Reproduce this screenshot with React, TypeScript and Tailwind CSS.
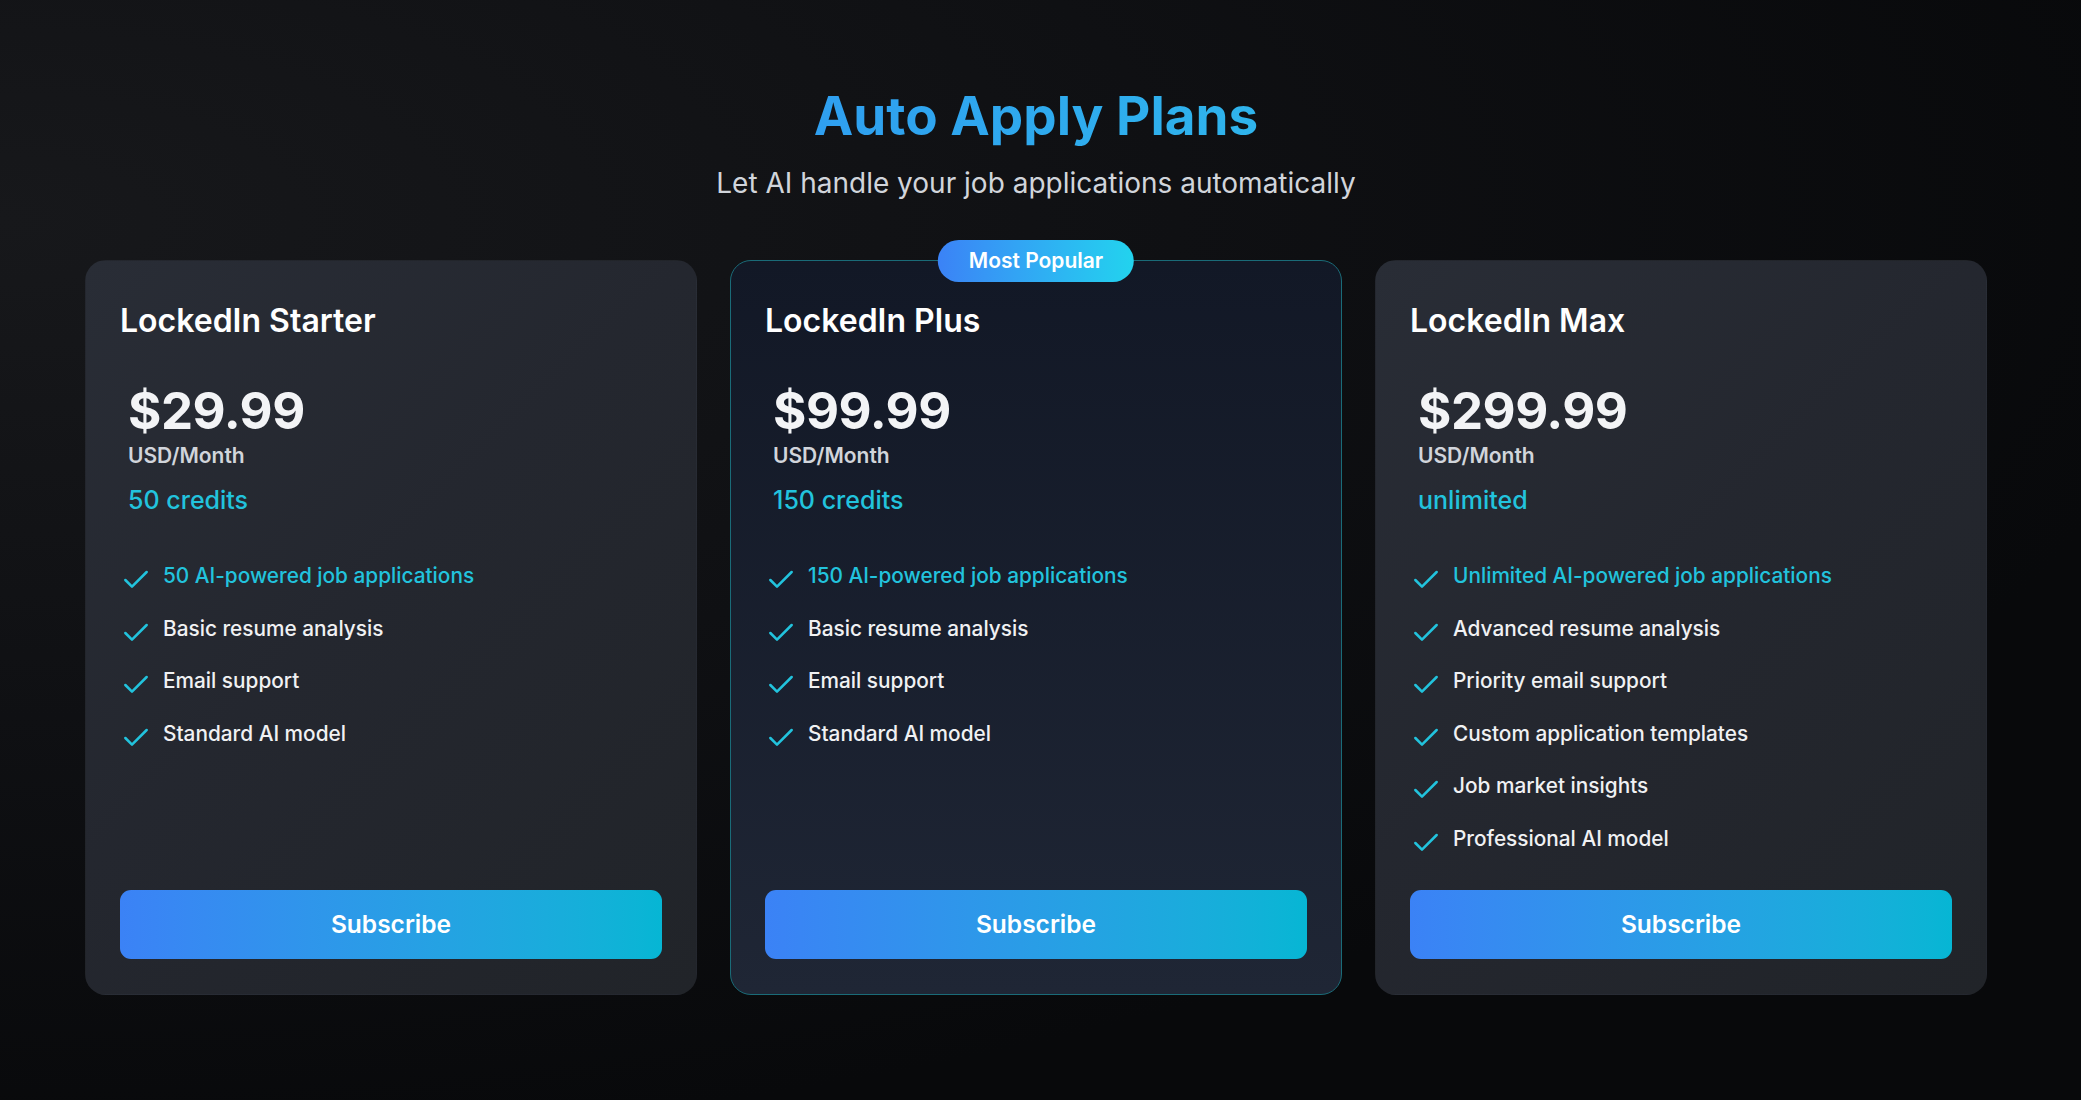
import React from "react";
import { Check } from "lucide-react";

type Plan = {
  name: string;
  price: string;
  credits: string;
  features: string[];
  popular?: boolean;
};

const plans: Plan[] = [
  {
    name: "LockedIn Starter",
    price: "$29.99",
    credits: "50 credits",
    features: [
      "50 AI-powered job applications",
      "Basic resume analysis",
      "Email support",
      "Standard AI model",
    ],
  },
  {
    name: "LockedIn Plus",
    price: "$99.99",
    credits: "150 credits",
    popular: true,
    features: [
      "150 AI-powered job applications",
      "Basic resume analysis",
      "Email support",
      "Standard AI model",
    ],
  },
  {
    name: "LockedIn Max",
    price: "$299.99",
    credits: "unlimited",
    features: [
      "Unlimited AI-powered job applications",
      "Advanced resume analysis",
      "Priority email support",
      "Custom application templates",
      "Job market insights",
      "Professional AI model",
    ],
  },
];

function PlanCard({ plan }: { plan: Plan }) {
  const base =
    "relative flex flex-col rounded-[21px] px-[34px] pt-[40px] pb-[35px]";
  const look = plan.popular
    ? "border border-[#1a6b78] bg-gradient-to-b from-[#121826] to-[#1f2635]"
    : "border border-transparent bg-[linear-gradient(135deg,#292d36_0%,#24272f_45%,#212429_100%)]";
  return (
    <div className={`${base} ${look}`}>
      {plan.popular && (
        <div className="absolute left-1/2 top-0 -translate-x-1/2 -translate-y-1/2 rounded-full bg-gradient-to-r from-[#3b82f6] to-[#22d3ee] px-[31px] py-[8px] text-[21px] font-semibold leading-[26px] text-white">
          Most Popular
        </div>
      )}
      <h3 className="text-[32px] font-semibold leading-[40px] text-white">
        {plan.name}
      </h3>
      <div className="mt-[40px] px-[8px]">
        <div className="text-[51px] font-bold leading-[60px] tracking-[-0.5px] text-[#f3f4f6]">
          {plan.price}
        </div>
        <div className="mt-[1px] text-[21px] font-semibold leading-[28px] text-[#d1d5db]">
          USD/Month
        </div>
        <div className="mt-[14px] text-[25px] font-medium leading-[32px] text-[#22c3dd]">
          {plan.credits}
        </div>
      </div>
      <ul className="mb-[31px] mt-[44px] flex flex-col gap-[16.5px]">
        {plan.features.map((f, i) => (
          <li key={f} className="flex items-start gap-[11px]">
            <Check
              className="mt-[4px] h-[32px] w-[32px] shrink-0 text-[#22c3dd]"
              strokeWidth={1.9}
            />
            <span
              className={`text-[20.8px] font-medium leading-[32px] ${
                i === 0 ? "text-[#22c3dd]" : "text-[#f0f1f3]"
              }`}
            >
              {f}
            </span>
          </li>
        ))}
      </ul>
      <button className="mt-auto flex h-[69px] w-full items-center justify-center rounded-[11px] bg-gradient-to-r from-[#3b82f6] to-[#06b6d4] text-[24.5px] font-semibold text-white">
        Subscribe
      </button>
    </div>
  );
}

export default function App() {
  return (
    <div
      className="min-h-[1100px] w-full bg-[#08090b] bg-[radial-gradient(ellipse_at_0%_20%,#17181b_0%,#0f1013_40%,#08090b_75%)]"
      style={{ fontFamily: "Inter, 'Noto Sans', sans-serif" }}
    >
      <div className="w-[2072px]">
        <div className="flex flex-col items-center pt-[84px]">
          <h1 className="bg-gradient-to-r from-[#2f9ff0] to-[#2fb4ec] bg-clip-text text-[53px] font-bold leading-[64px] text-transparent">
            Auto Apply Plans
          </h1>
          <p className="mt-[17px] text-[28px] leading-[36px] text-[#d1d5db]">
            Let AI handle your job applications automatically
          </p>
        </div>
        <div className="mx-auto mt-[59px] grid w-[1902px] grid-cols-3 gap-[33px]">
          {plans.map((p) => (
            <PlanCard key={p.name} plan={p} />
          ))}
        </div>
      </div>
    </div>
  );
}
